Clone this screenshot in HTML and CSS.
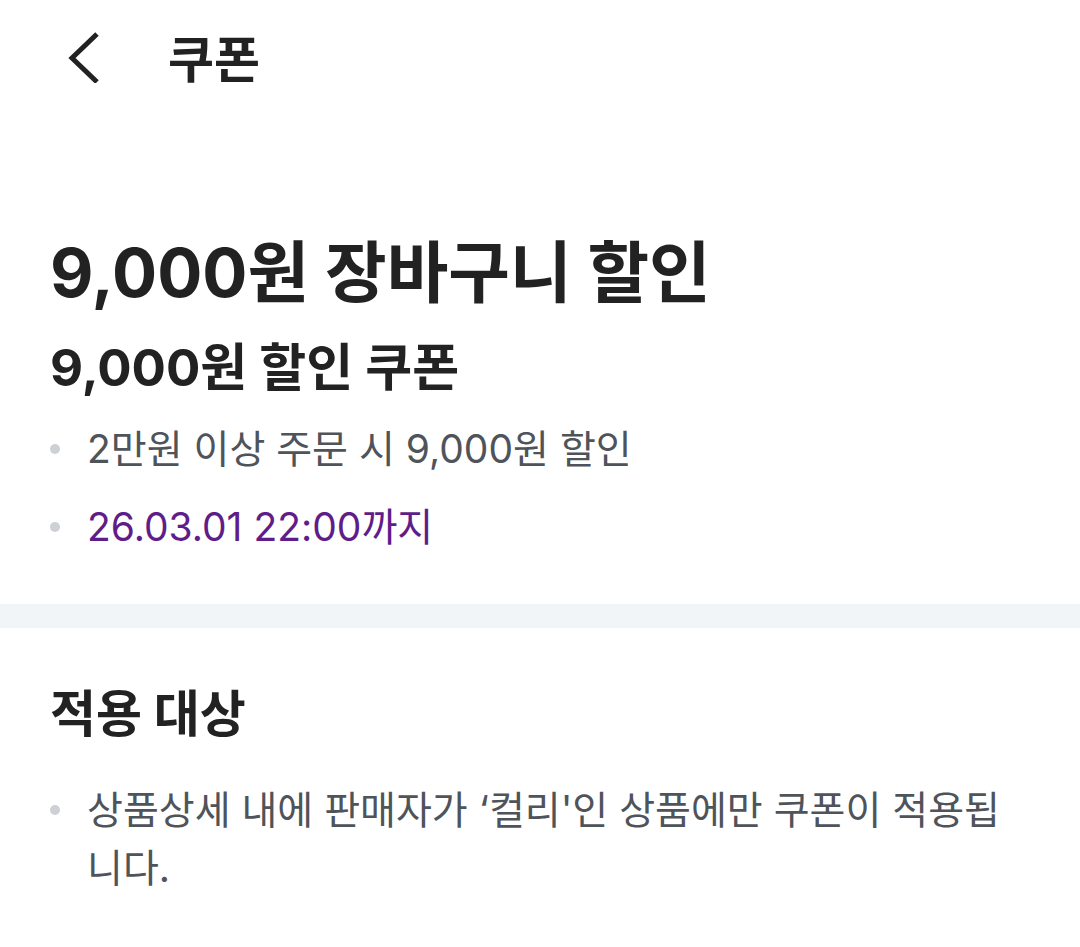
FILE: index.html
```
<!DOCTYPE html>
<html lang="ko">
<head>
  <meta charset="UTF-8">
  <meta name="viewport" content="width=device-width, initial-scale=1.0">
  <title>쿠폰</title>
  <link rel="stylesheet" href="styles.css">
</head>
<body>
  <div class="header">
    <a class="back" href="javascript:;">
      <svg width="40" height="52" viewBox="0 0 40 52"><path d="M33 3 L8 27 L33 51" fill="none" stroke="#222" stroke-width="5"/></svg>
    </a>
    <h1 class="header-title">쿠폰</h1>
  </div>

  <div class="coupon">
    <h2 class="coupon-name">9,000원 장바구니 할인</h2>
    <h3 class="coupon-sub">9,000원 할인 쿠폰</h3>
    <ul class="info">
      <li>2만원 이상 주문 시 9,000원 할인</li>
      <li class="date">26.03.01 22:00까지</li>
    </ul>
  </div>

  <div class="divider"></div>

  <div class="target">
    <h3 class="target-title">적용 대상</h3>
    <ul class="info">
      <li>상품상세 내에 판매자가 ‘컬리'인 상품에만 쿠폰이 적용됩니다.</li>
    </ul>
  </div>
</body>
</html>
```
FILE: styles.css
```
*{
  margin:0;
  padding:0;
}
body{
  font-family:Inter,"Noto Sans CJK KR",sans-serif;
  color:#222;
  background:#fff;
}
ul{
  list-style:none;
}
.header{
  display:flex;
  align-items:center;
  height:120px;
  padding-left:64px;
}
.back{
  display:flex;
  width:40px;
  margin-top:-6px;
}
.header-title{
  margin-left:64px;
  font-size:50px;
  font-weight:700;
  line-height:60px;
}
.coupon{
  padding:113px 50px 47px;
}
.coupon-name{
  font-size:67px;
  font-weight:700;
  line-height:80px;
}
.coupon-sub{
  margin-top:23px;
  font-size:51px;
  font-weight:700;
  line-height:64px;
}
.info{
  margin-top:19px;
}
.info li{
  position:relative;
  padding-left:37px;
  font-size:39px;
  line-height:60px;
  color:#4f535a;
  margin-bottom:18px;
}
.info li:last-child{
  margin-bottom:0;
}
.info li::before{
  content:"";
  position:absolute;
  left:0;
  top:25px;
  width:10px;
  height:10px;
  border-radius:50%;
  background:#cdd0d4;
}
.info .date{
  color:#5f1d8a;
}
.divider{
  height:24px;
  background:#f2f5f8;
}
.target{
  padding:51px 50px 40px;
}
.target-title{
  font-size:50px;
  font-weight:700;
  line-height:70px;
}
.target .info{
  margin-top:32px;
}
.target .info li{
  line-height:58px;
}
.target .info li::before{
  top:24px;
}
```
